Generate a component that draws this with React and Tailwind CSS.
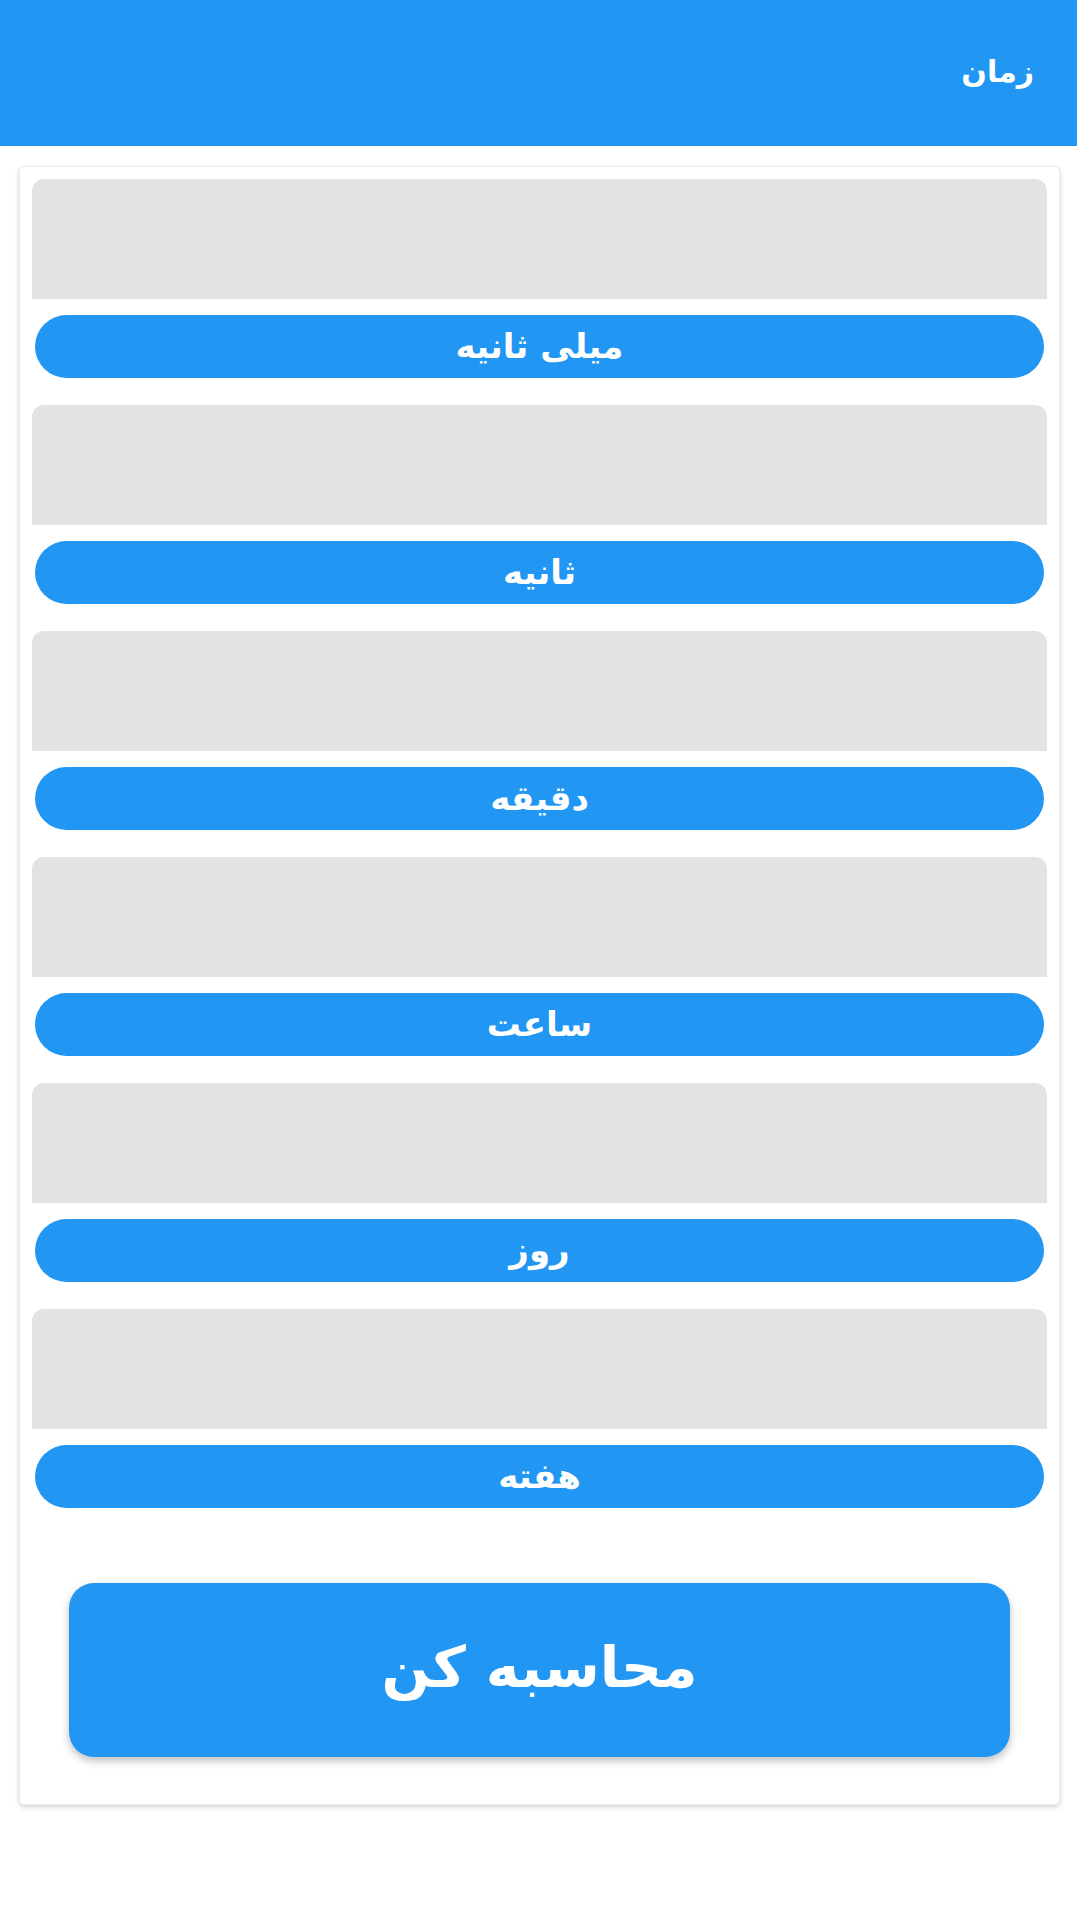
import React from "react";

const units = ["میلی ثانیه", "ثانیه", "دقیقه", "ساعت", "روز", "هفته"];

function Field({ label }) {
  return (
    <div className="flex flex-col">
      <div className="h-[120px] rounded-t-[12px] bg-[#e4e3e4]" />
      <div className="mx-[3px] mt-[16px] flex h-[63px] items-center justify-center rounded-full bg-[#2196f3] text-[34px] font-bold leading-none text-white">
        <span className="-mt-[1px]">{label}</span>
      </div>
    </div>
  );
}

export default function App() {
  return (
    <div
      dir="rtl"
      className="min-h-[1915px] w-[1077px] bg-white"
      style={{ fontFamily: '"DejaVu Sans", "Noto Sans", sans-serif' }}
    >
      <header className="flex h-[146px] items-center bg-[#2196f3] pr-[43px]">
        <h1 className="-mt-[3px] text-[30px] font-bold text-white">زمان</h1>
      </header>
      <div className="ml-[19px] mr-[17px] mt-[20px] flex flex-col rounded-[5px] border border-[#ececec] bg-white px-[12px] pb-[47px] pt-[12px] shadow-[0_2px_5px_rgba(0,0,0,0.18)]">
        <div className="flex flex-col gap-[27px]">
          {units.map((u) => (
            <Field key={u} label={u} />
          ))}
        </div>
        <button className="mx-[37px] mt-[75px] flex h-[174px] items-center justify-center rounded-[25px] bg-[#2196f3] text-[57px] font-bold text-white shadow-[0_4px_8px_rgba(0,0,0,0.25)]">
          <span className="-mt-[4px]">محاسبه کن</span>
        </button>
      </div>
    </div>
  );
}
